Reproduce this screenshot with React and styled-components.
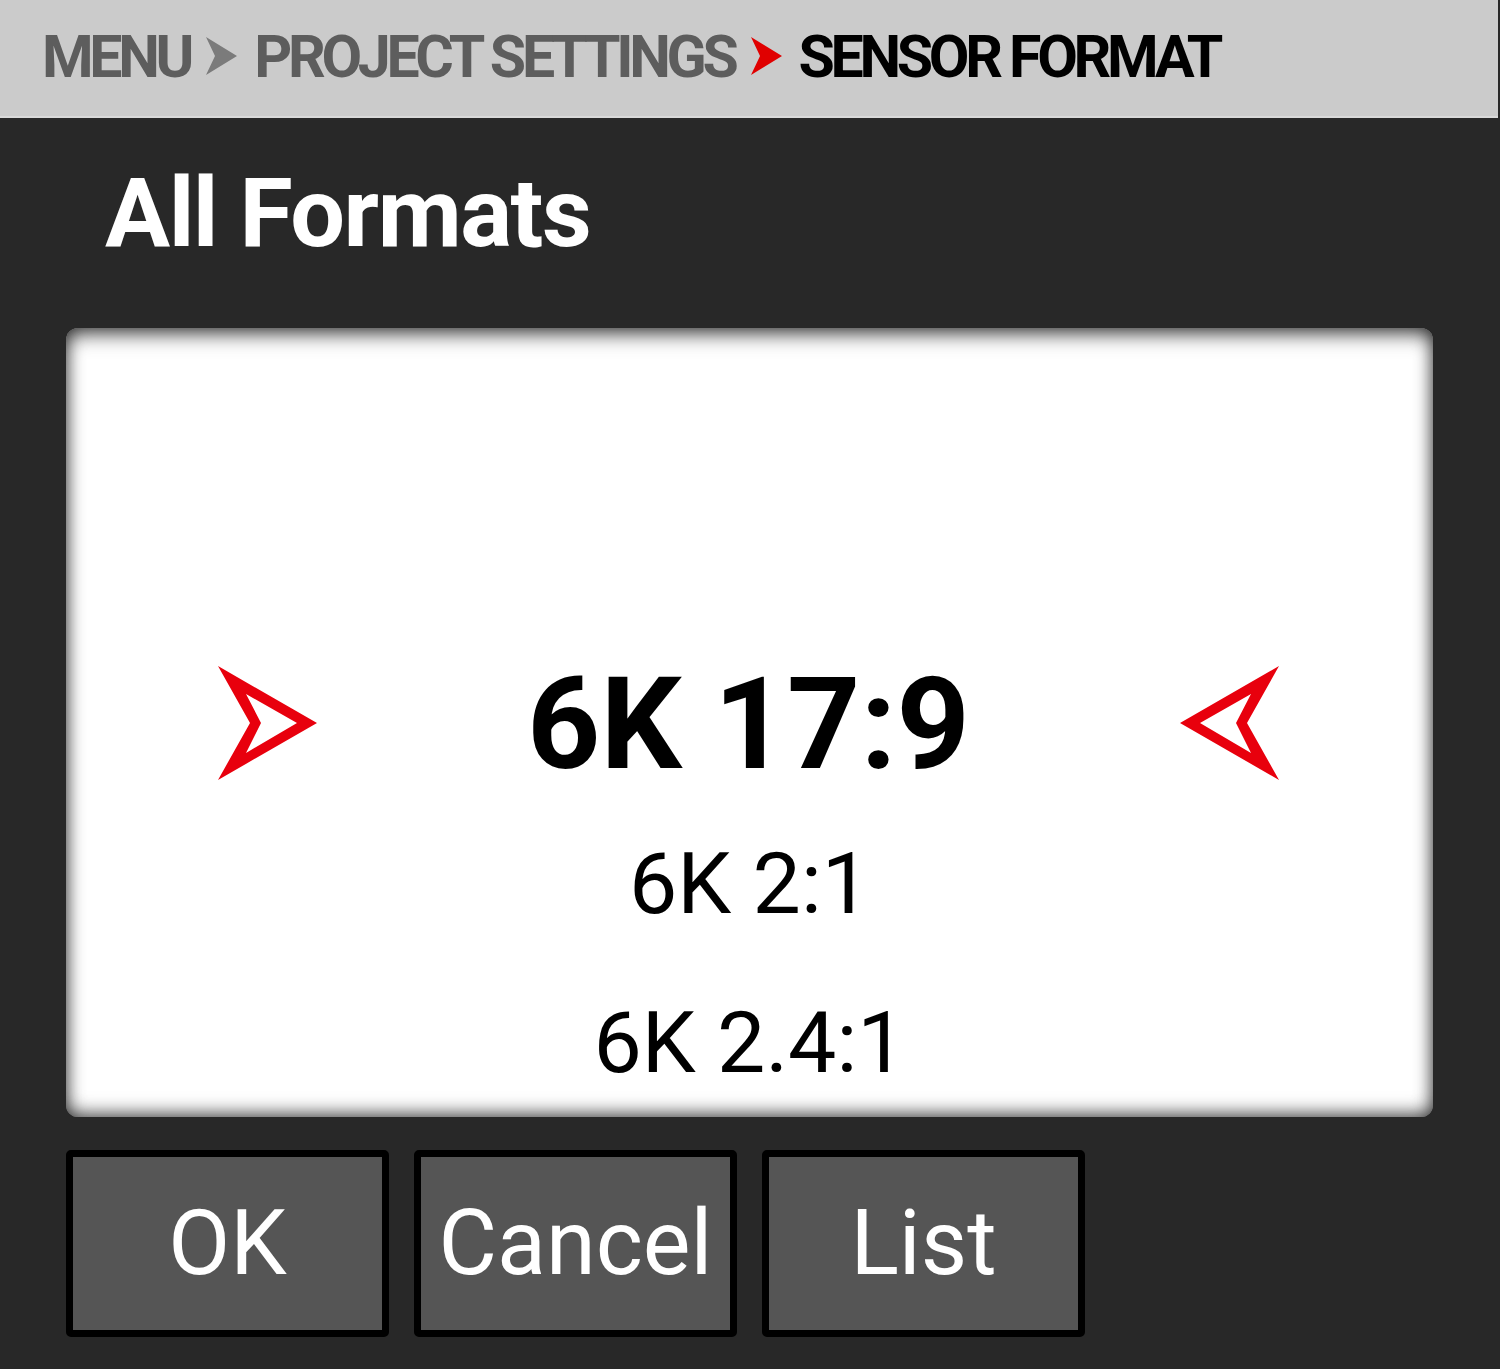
import React from "react";
import styled, { createGlobalStyle } from "styled-components";

// -----------------------------------
// Styled Components
// -----------------------------------

const GlobalStyle = createGlobalStyle`
  body {
    margin: 0;
    background: #282828;
    font-family: Roboto, "Liberation Sans", sans-serif;
  }
`;

const Screen = styled.div`
  width: 1500px;
  height: 1369px;
  display: flex;
  flex-direction: column;
  background: #282828;
  overflow: hidden;
`;

const Breadcrumb = styled.div`
  height: 118px;
  margin-right: 2px;
  display: flex;
  align-items: center;
  gap: 16px;
  padding: 0 0 4px 42px;
  box-sizing: border-box;
  background: #cbcbcb;
  border-bottom: 2px solid #d9d9d9;
`;

const Crumb = styled.span`
  font-family: Roboto, sans-serif;
  font-weight: 700;
  font-size: 59px;
  line-height: 1;
  letter-spacing: -4.3px;
  color: ${(p) => (p.$active ? "#000000" : "#5d5d5d")};
  white-space: nowrap;
`;

const Title = styled.h1`
  margin: 47px 0 0 105px;
  font-family: Roboto, sans-serif;
  font-weight: 700;
  font-size: 97px;
  line-height: 1;
  letter-spacing: -1.5px;
  color: #ffffff;
`;

const Panel = styled.div`
  margin: 66px 0 0 66px;
  width: 1367px;
  height: 789px;
  box-sizing: border-box;
  padding-top: 316px;
  display: flex;
  flex-direction: column;
  background: #ffffff;
  border-radius: 12px;
  overflow: hidden;
  box-shadow: inset 0 10px 22px -6px rgba(0, 0, 0, 0.7),
    inset 0 -8px 20px -6px rgba(0, 0, 0, 0.55),
    inset 0 0 18px rgba(0, 0, 0, 0.4);
`;

const SelectedRow = styled.div`
  height: 160px;
  flex-shrink: 0;
  padding: 0 154px 0 152px;
  display: flex;
  align-items: center;
  justify-content: space-between;
`;

const Option = styled.div`
  height: ${(p) => p.$h}px;
  flex-shrink: 0;
  display: flex;
  align-items: center;
  justify-content: center;
  font-family: Roboto, sans-serif;
  font-weight: ${(p) => (p.$selected ? 700 : 400)};
  font-size: ${(p) => (p.$selected ? 128 : 86)}px;
  line-height: 1;
  color: #000000;
  white-space: nowrap;
`;

const ButtonBar = styled.div`
  margin: 33px 0 0 66px;
  display: flex;
  gap: 25px;
`;

const Button = styled.button`
  width: 323px;
  height: 187px;
  box-sizing: border-box;
  border: 7px solid #000000;
  border-radius: 5px;
  background: #555555;
  color: #ffffff;
  font-family: Roboto, sans-serif;
  font-weight: 400;
  font-size: 90px;
  line-height: 1;
  padding: 0;
  display: flex;
  align-items: center;
  justify-content: center;
`;

// -----------------------------------
// React Components
// -----------------------------------

const Chevron = ({ color }) => (
  <svg width="32" height="38" viewBox="0 0 32 38">
    <path d="M0 0 L31 19 L0 38 L9 19 Z" fill={color} />
  </svg>
);

const Pointer = ({ flip }) => (
  <svg
    width="100"
    height="116"
    viewBox="0 0 100 116"
    style={flip ? { transform: "scaleX(-1)" } : undefined}
  >
    <path
      d="M0 0 L99 57 L0 114 L32 57 Z M28 28 L79 57 L28 87 L43 57 Z"
      fill="#e8000d"
      fillRule="evenodd"
    />
  </svg>
);

const formats = ["6K 2:1", "6K 2.4:1"];

export default function App() {
  return (
    <Screen>
      <GlobalStyle />
      <Breadcrumb>
        <Crumb>MENU</Crumb>
        <Chevron color="#7b7b7b" />
        <Crumb>PROJECT SETTINGS</Crumb>
        <Chevron color="#e00000" />
        <Crumb $active>SENSOR FORMAT</Crumb>
      </Breadcrumb>
      <Title>All Formats</Title>
      <Panel>
        <SelectedRow>
          <Pointer />
          <Option $selected $h={160}>6K 17:9</Option>
          <Pointer flip />
        </SelectedRow>
        {formats.map((f) => (
          <Option key={f} $h={159}>
            {f}
          </Option>
        ))}
      </Panel>
      <ButtonBar>
        <Button>OK</Button>
        <Button>Cancel</Button>
        <Button>List</Button>
      </ButtonBar>
    </Screen>
  );
}
